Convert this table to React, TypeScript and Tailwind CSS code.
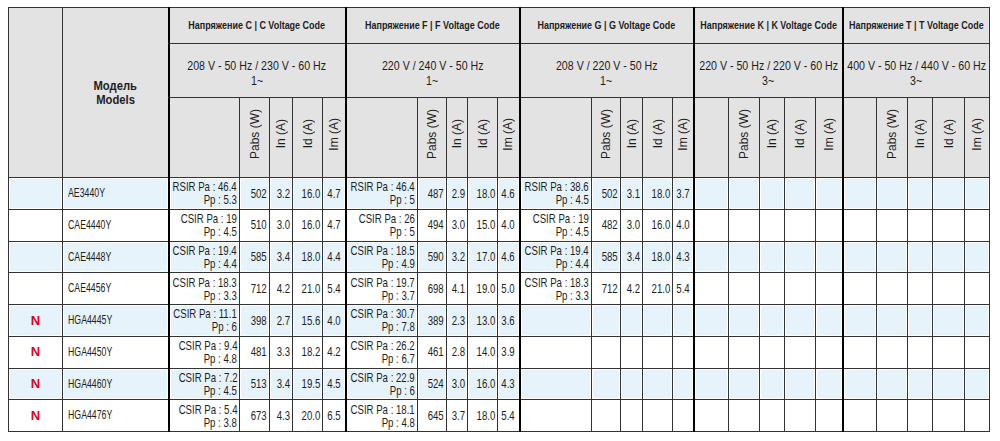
import React from "react";

type Vals = { d1: string; d2: string; p: string; i: string; id: string; im: string } | null;

type Row = { n: boolean; model: string; c: Vals; f: Vals; g: Vals };

const rows: Row[] = [
  {
    n: false,
    model: "AE3440Y",
    c: { d1: "RSIR Pa : 46.4", d2: "Pp : 5.3", p: "502", i: "3.2", id: "16.0", im: "4.7" },
    f: { d1: "RSIR Pa : 46.4", d2: "Pp : 5", p: "487", i: "2.9", id: "18.0", im: "4.6" },
    g: { d1: "RSIR Pa : 38.6", d2: "Pp : 4.5", p: "502", i: "3.1", id: "18.0", im: "3.7" },
  },
  {
    n: false,
    model: "CAE4440Y",
    c: { d1: "CSIR Pa : 19", d2: "Pp : 4.5", p: "510", i: "3.0", id: "16.0", im: "4.7" },
    f: { d1: "CSIR Pa : 26", d2: "Pp : 5", p: "494", i: "3.0", id: "15.0", im: "4.0" },
    g: { d1: "CSIR Pa : 19", d2: "Pp : 4.5", p: "482", i: "3.0", id: "16.0", im: "4.0" },
  },
  {
    n: false,
    model: "CAE4448Y",
    c: { d1: "CSIR Pa : 19.4", d2: "Pp : 4.4", p: "585", i: "3.4", id: "18.0", im: "4.4" },
    f: { d1: "CSIR Pa : 18.5", d2: "Pp : 4.9", p: "590", i: "3.2", id: "17.0", im: "4.6" },
    g: { d1: "CSIR Pa : 19.4", d2: "Pp : 4.4", p: "585", i: "3.4", id: "18.0", im: "4.3" },
  },
  {
    n: false,
    model: "CAE4456Y",
    c: { d1: "CSIR Pa : 18.3", d2: "Pp : 3.3", p: "712", i: "4.2", id: "21.0", im: "5.4" },
    f: { d1: "CSIR Pa : 19.7", d2: "Pp : 3.7", p: "698", i: "4.1", id: "19.0", im: "5.0" },
    g: { d1: "CSIR Pa : 18.3", d2: "Pp : 3.3", p: "712", i: "4.2", id: "21.0", im: "5.4" },
  },
  {
    n: true,
    model: "HGA4445Y",
    c: { d1: "CSIR Pa : 11.1", d2: "Pp : 6", p: "398", i: "2.7", id: "15.6", im: "4.0" },
    f: { d1: "CSIR Pa : 30.7", d2: "Pp : 7.8", p: "389", i: "2.3", id: "13.0", im: "3.6" },
    g: null,
  },
  {
    n: true,
    model: "HGA4450Y",
    c: { d1: "CSIR Pa : 9.4", d2: "Pp : 4.8", p: "481", i: "3.3", id: "18.2", im: "4.2" },
    f: { d1: "CSIR Pa : 26.2", d2: "Pp : 6.7", p: "461", i: "2.8", id: "14.0", im: "3.9" },
    g: null,
  },
  {
    n: true,
    model: "HGA4460Y",
    c: { d1: "CSIR Pa : 7.2", d2: "Pp : 4.5", p: "513", i: "3.4", id: "19.5", im: "4.5" },
    f: { d1: "CSIR Pa : 22.9", d2: "Pp : 6", p: "524", i: "3.0", id: "16.0", im: "4.3" },
    g: null,
  },
  {
    n: true,
    model: "HGA4476Y",
    c: { d1: "CSIR Pa : 5.4", d2: "Pp : 3.8", p: "673", i: "4.3", id: "20.0", im: "6.5" },
    f: { d1: "CSIR Pa : 18.1", d2: "Pp : 4.8", p: "645", i: "3.7", id: "18.0", im: "5.4" },
    g: null,
  },
];

const groups = [
  { code: "C", v: "208 V - 50 Hz / 230 V - 60 Hz", ph: "1~" },
  { code: "F", v: "220 V / 240 V - 50 Hz", ph: "1~" },
  { code: "G", v: "208 V / 220 V - 50 Hz", ph: "1~" },
  { code: "K", v: "220 V - 50 Hz / 220 V - 60 Hz", ph: "3~" },
  { code: "T", v: "400 V - 50 Hz / 440 V - 60 Hz", ph: "3~" },
];

const thin = "border border-[#333]";
const thick = "border-l-2 border-l-black";
const hdr = "bg-[#e3e3e3]";

function Rot({ t }: { t: string }) {
  return (
    <th className={`${thin} ${hdr} p-0 align-middle text-center font-normal`}>
      <span className="inline-block rotate-180 whitespace-nowrap text-[12px] leading-[12px] [writing-mode:vertical-rl]">
        {t}
      </span>
    </th>
  );
}

function Num({ t, center }: { t: string; center?: boolean }) {
  if (center) {
    return (
      <div className="flex justify-center">
        <span className="inline-block origin-center scale-x-[0.74] whitespace-nowrap">{t}</span>
      </div>
    );
  }
  return (
    <div className="flex justify-end">
      <span className="inline-block origin-right scale-x-[0.74] whitespace-nowrap">{t}</span>
    </div>
  );
}

function GroupCells({ v, bg }: { v: Vals; bg: string }) {
  if (!v) {
    return (
      <>
        <td className={`${thin} ${thick} ${bg}`} />
        <td className={`${thin} ${bg}`} />
        <td className={`${thin} ${bg}`} />
        <td className={`${thin} ${bg}`} />
        <td className={`${thin} ${bg}`} />
      </>
    );
  }
  return (
    <>
      <td className={`${thin} ${thick} ${bg} p-0 pr-[2px] align-middle text-[13px] leading-[13px]`}>
        <div className="flex flex-col items-end">
          <span className="inline-block origin-right scale-x-[0.74] whitespace-nowrap">{v.d1}</span>
          <span className="inline-block origin-right scale-x-[0.74] whitespace-nowrap">{v.d2}</span>
        </div>
      </td>
      <td className={`${thin} ${bg} p-0 pr-[2px] align-middle text-[13px]`}>
        <Num t={v.p} />
      </td>
      <td className={`${thin} ${bg} p-0 pr-[2px] align-middle text-[13px]`}>
        <Num t={v.i} />
      </td>
      <td className={`${thin} ${bg} p-0 pr-[2px] align-middle text-[13px]`}>
        <Num t={v.id} />
      </td>
      <td className={`${thin} ${bg} p-0 align-middle text-[13px]`}>
        <Num t={v.im} center />
      </td>
    </>
  );
}

export default function App() {
  return (
    <div className="h-[441px] w-[1000px] overflow-hidden bg-white pl-[8px] pt-[7px] font-['Liberation_Sans',Arial,sans-serif] text-[#1e1e1e]">
      <table className="w-[981px] table-fixed border-collapse">
        <colgroup>
          <col className="w-[54px]" />
          <col className="w-[106px]" />
          <col className="w-[71px]" />
          <col className="w-[30px]" />
          <col className="w-[23px]" />
          <col className="w-[30px]" />
          <col className="w-[23px]" />
          <col className="w-[72px]" />
          <col className="w-[29px]" />
          <col className="w-[21px]" />
          <col className="w-[30px]" />
          <col className="w-[22px]" />
          <col className="w-[72px]" />
          <col className="w-[29px]" />
          <col className="w-[22px]" />
          <col className="w-[30px]" />
          <col className="w-[21px]" />
          <col className="w-[35px]" />
          <col className="w-[31px]" />
          <col className="w-[25px]" />
          <col className="w-[31px]" />
          <col className="w-[27px]" />
          <col className="w-[34px]" />
          <col className="w-[31px]" />
          <col className="w-[25px]" />
          <col className="w-[32px]" />
          <col className="w-[25px]" />
        </colgroup>
        <thead>
          <tr className="h-[36px]">
            <th rowSpan={3} className={`${thin} ${hdr}`} />
            <th rowSpan={3} className={`${thin} ${hdr} p-0 align-middle text-[12.5px] font-bold leading-[14px]`}>
              <div className="flex flex-col items-center">
                <span className="inline-block origin-center scale-x-[0.9] whitespace-nowrap">Модель</span>
                <span className="inline-block origin-center scale-x-[0.9] whitespace-nowrap">Models</span>
              </div>
            </th>
            {groups.map((g) => (
              <th
                key={g.code}
                colSpan={5}
                className={`${thin} ${thick} ${hdr} p-0 align-middle text-[11.5px] font-bold`}
              >
                <div className="flex justify-center">
                  <span className="inline-block origin-center scale-x-[0.78] whitespace-nowrap">
                    Напряжение {g.code} | {g.code} Voltage Code
                  </span>
                </div>
              </th>
            ))}
          </tr>
          <tr className="h-[54px]">
            {groups.map((g) => (
              <th
                key={g.code}
                colSpan={5}
                className={`${thin} ${thick} ${hdr} p-0 pt-[6px] align-middle text-[12.5px] font-normal leading-[15px]`}
              >
                <div className="flex flex-col items-center">
                  <span className="inline-block origin-center scale-x-[0.85] whitespace-nowrap">{g.v}</span>
                  <span className="inline-block origin-center scale-x-[0.85] whitespace-nowrap">{g.ph}</span>
                </div>
              </th>
            ))}
          </tr>
          <tr className="h-[80px]">
            {groups.map((g) => (
              <React.Fragment key={g.code}>
                <th className={`${thin} ${thick} ${hdr}`} />
                <Rot t="Pabs (W)" />
                <Rot t="In (A)" />
                <Rot t="Id (A)" />
                <Rot t="Im (A)" />
              </React.Fragment>
            ))}
          </tr>
        </thead>
        <tbody>
          {rows.map((r, idx) => {
            const bg = idx % 2 === 0 ? "bg-[#e6f3fa] shadow-[inset_0_0_0_1px_#fff]" : "bg-white";
            return (
              <tr key={r.model} className="h-[31.75px]">
                <td className={`${thin} ${bg} p-0 text-center align-middle text-[13px] font-bold text-[#e3001b]`}>
                  {r.n ? "N" : ""}
                </td>
                <td className={`${thin} ${bg} p-0 pl-[5px] align-middle text-[12.5px]`}>
                  <span className="inline-block origin-left scale-x-[0.7] whitespace-nowrap">{r.model}</span>
                </td>
                <GroupCells v={r.c} bg={bg} />
                <GroupCells v={r.f} bg={bg} />
                <GroupCells v={r.g} bg={bg} />
                <GroupCells v={null} bg={bg} />
                <GroupCells v={null} bg={bg} />
              </tr>
            );
          })}
        </tbody>
      </table>
    </div>
  );
}
